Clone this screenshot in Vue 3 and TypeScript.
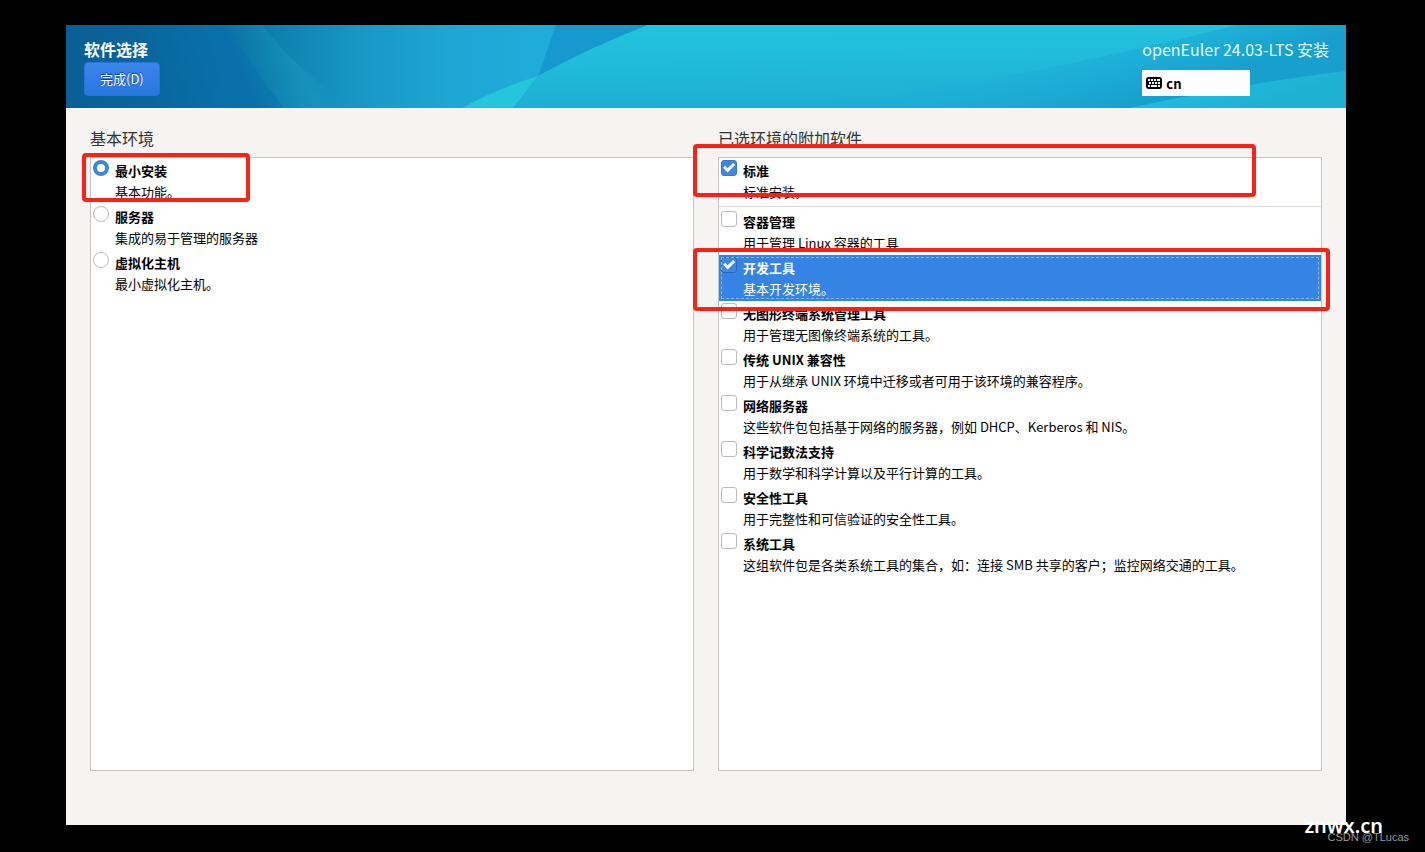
<script setup lang="ts">
import { ref } from 'vue'

interface Choice {
  id: string
  title: string
  summary: string
}

const environments: Choice[] = [
  { id: 'minimal', title: '最小安装', summary: '基本功能。' },
  { id: 'server', title: '服务器', summary: '集成的易于管理的服务器' },
  { id: 'virtualization', title: '虚拟化主机', summary: '最小虚拟化主机。' },
]

const environmentAddons: Choice[] = [
  { id: 'standard', title: '标准', summary: '标准安装。' },
]

const commonAddons: Choice[] = [
  { id: 'container', title: '容器管理', summary: '用于管理 Linux 容器的工具' },
  { id: 'development', title: '开发工具', summary: '基本开发环境。' },
  { id: 'headless', title: '无图形终端系统管理工具', summary: '用于管理无图像终端系统的工具。' },
  { id: 'legacy', title: '传统 UNIX 兼容性', summary: '用于从继承 UNIX 环境中迁移或者可用于该环境的兼容程序。' },
  { id: 'network', title: '网络服务器', summary: '这些软件包包括基于网络的服务器，例如 DHCP、Kerberos 和 NIS。' },
  { id: 'scientific', title: '科学记数法支持', summary: '用于数学和科学计算以及平行计算的工具。' },
  { id: 'security', title: '安全性工具', summary: '用于完整性和可信验证的安全性工具。' },
  { id: 'system', title: '系统工具', summary: '这组软件包是各类系统工具的集合，如：连接 SMB 共享的客户；监控网络交通的工具。' },
]

const environment = ref('minimal')
const addons = ref<string[]>(['standard', 'development'])
const activeRow = ref('development')
</script>

<template>
  <div class="screen">
    <main class="installer">
      <header class="banner">
        <svg class="banner-art" viewBox="0 0 1280 83" preserveAspectRatio="none" aria-hidden="true">
          <defs>
            <linearGradient id="base" x1="0" x2="1" y1="0" y2="0">
              <stop offset="0" stop-color="#085f95" />
              <stop offset="0.11" stop-color="#096ba1" />
              <stop offset="0.17" stop-color="#0f82b2" />
              <stop offset="0.23" stop-color="#1897c5" />
              <stop offset="0.3" stop-color="#1ea6d5" />
              <stop offset="0.37" stop-color="#20acda" />
              <stop offset="1" stop-color="#20acda" />
            </linearGradient>
            <linearGradient id="valley" gradientUnits="userSpaceOnUse" x1="90" x2="225" y1="85" y2="30">
              <stop offset="0" stop-color="#0a6ca4" stop-opacity="0" />
              <stop offset="0.65" stop-color="#0970ac" />
              <stop offset="1" stop-color="#0d83b5" stop-opacity="0" />
            </linearGradient>
            <linearGradient id="ridge" gradientUnits="userSpaceOnUse" x1="185" x2="252" y1="60" y2="30">
              <stop offset="0" stop-color="#1592b8" stop-opacity="0" />
              <stop offset="0.7" stop-color="#1c9fc5" stop-opacity="0.4" />
              <stop offset="1" stop-color="#1799c4" stop-opacity="0.1" />
            </linearGradient>
            <linearGradient id="wave" x1="0" x2="0.12" y1="0" y2="1">
              <stop offset="0" stop-color="#23c4df" />
              <stop offset="0.5" stop-color="#21badb" />
              <stop offset="1" stop-color="#1eaed4" />
            </linearGradient>
            <linearGradient id="dusk" gradientUnits="userSpaceOnUse" x1="1010" x2="1045" y1="-10" y2="90">
              <stop offset="0" stop-color="#20afda" stop-opacity="0" />
              <stop offset="1" stop-color="#179fce" />
            </linearGradient>
            <linearGradient id="crest" gradientUnits="userSpaceOnUse" x1="1180" x2="1190" y1="55" y2="83">
              <stop offset="0" stop-color="#20b8dc" />
              <stop offset="1" stop-color="#1fb1d2" />
            </linearGradient>
          </defs>
          <rect width="1280" height="83" fill="url(#base)" />
          <path d="M60 0H160Q187 42 218 83H60Z" fill="url(#valley)" />
          <path d="M160 0H196Q235 50 290 83H218Q187 42 160 0Z" fill="url(#ridge)" />
          <path d="M490 0H582Q525 22 472 51Z" fill="#1798cf" />
          <path d="M396 83Q430 64 472 51L447 83Z" fill="#25c6dc" />
          <path d="M447 83L472 51Q525 22 582 0H1280V83Z" fill="url(#wave)" />
          <path d="M740 83Q960 54 1170 0H1280V83Z" fill="url(#dusk)" />
          <path d="M1063 83Q1180 58 1280 46V83Z" fill="url(#crest)" />
        </svg>
        <div class="banner-left">
          <h1 class="page-title">软件选择</h1>
          <button class="done" type="button">完成(D)</button>
        </div>
        <div class="banner-right">
          <span class="product">openEuler 24.03-LTS 安装</span>
          <button class="layout" type="button" aria-label="键盘布局 cn">
            <svg width="16" height="12" viewBox="0 0 16 12" aria-hidden="true">
              <rect width="16" height="12" rx="3" fill="#000" />
              <path
                d="M2 2h2v2H2zM5 2h2v2H5zM8 2h2v2H8zM11 2h3v2h-3zM3 5h2v2H3zM6 5h2v2H6zM9 5h2v2H9zM12 5h2v2h-2zM2 8h2v2H2zM5 8h6v2H5zM12 8h2v2h-2z"
                fill="#fff"
              />
            </svg>
            <span>cn</span>
          </button>
        </div>
      </header>

      <div class="columns">
        <section class="column">
          <h2 id="env-heading" class="heading">基本环境</h2>
          <div class="list" role="radiogroup" aria-labelledby="env-heading">
            <label v-for="item in environments" :key="item.id" class="row">
              <input v-model="environment" class="mark radio" type="radio" name="environment" :value="item.id" />
              <span class="text">
                <strong class="title">{{ item.title }}</strong>
                <span class="summary">{{ item.summary }}</span>
              </span>
            </label>
            <span class="callout callout-minimal" aria-hidden="true"></span>
          </div>
        </section>

        <section class="column">
          <h2 id="addon-heading" class="heading">已选环境的附加软件</h2>
          <div class="list" role="group" aria-labelledby="addon-heading">
            <label
              v-for="item in environmentAddons"
              :key="item.id"
              class="row"
              :class="{ active: activeRow === item.id }"
              @click="activeRow = item.id"
            >
              <input v-model="addons" class="mark check" type="checkbox" :value="item.id" />
              <span class="text">
                <strong class="title">{{ item.title }}</strong>
                <span class="summary">{{ item.summary }}</span>
              </span>
            </label>
            <hr class="divider" />
            <label
              v-for="item in commonAddons"
              :key="item.id"
              class="row"
              :class="{ active: activeRow === item.id }"
              @click="activeRow = item.id"
            >
              <input v-model="addons" class="mark check" type="checkbox" :value="item.id" />
              <span class="text">
                <strong class="title">{{ item.title }}</strong>
                <span class="summary">{{ item.summary }}</span>
              </span>
            </label>
            <span class="callout callout-standard" aria-hidden="true"></span>
            <span class="callout callout-development" aria-hidden="true"></span>
          </div>
        </section>
      </div>
    </main>
    <span class="site-mark">znwx.cn</span>
    <span class="author-mark">CSDN @TLucas</span>
  </div>
</template>

<style>
body {
  margin: 0;
  background: #000;
}
</style>

<style scoped>
.screen {
  position: relative;
  box-sizing: border-box;
  display: flex;
  min-height: 100vh;
  padding: 25px 79px 27px 66px;
  background: #000;
  color: #000;
  font-family: 'Noto Sans CJK SC', 'Noto Sans', sans-serif;
  font-size: 13px;
}

.installer {
  flex: 1;
  min-width: 0;
  display: flex;
  flex-direction: column;
  background: #f5f4f2;
}

.banner {
  position: relative;
  display: flex;
  justify-content: space-between;
  box-sizing: border-box;
  min-height: 83px;
  padding: 12px 17px 12px 18px;
  color: #fff;
}

.banner-art {
  position: absolute;
  inset: 0;
  width: 100%;
  height: 100%;
}

.banner-left,
.banner-right {
  position: relative;
  display: flex;
  flex-direction: column;
  align-items: flex-start;
}

.page-title {
  margin: 0;
  font-size: 16px;
  line-height: 24px;
}

.done {
  height: 34px;
  margin-top: 1px;
  padding: 0 15px 2px;
  border: 1px solid #2b74d6;
  border-radius: 4px;
  background: linear-gradient(#3a86ea, #2a76e2);
  color: #fff;
  font: inherit;
  text-shadow: 0 -1px 1px rgba(0, 20, 70, 0.7);
}

.product {
  font-size: 16px;
  line-height: 24px;
  color: #e2fbff;
}

.layout {
  display: flex;
  align-items: center;
  gap: 4px;
  width: 108px;
  height: 26px;
  margin-top: 9px;
  padding: 0 4px;
  border: 0;
  background: #fdfdfd;
  color: #000;
  font: inherit;
  font-weight: 700;
}

.columns {
  flex: 1;
  display: grid;
  grid-template-columns: 1fr 1fr;
  gap: 24px;
  padding: 18px 24px 54px;
}

.column {
  display: flex;
  flex-direction: column;
  min-width: 0;
}

.heading {
  margin: 0 0 7px;
  font-size: 16px;
  font-weight: 400;
  line-height: 24px;
  color: #333;
}

.list {
  position: relative;
  flex: 1;
  border: 1px solid #c8c5c2;
  background: #fff;
}

.row {
  display: flex;
  gap: 6px;
  padding: 2px;
}

.text {
  display: flex;
  flex-direction: column;
  line-height: 21px;
}

.active {
  background: #3584e4;
  color: #fff;
  outline: 1px dashed #85b8f2;
  outline-offset: -3px;
}

.mark {
  appearance: none;
  flex: none;
  box-sizing: border-box;
  width: 16px;
  height: 16px;
  margin: 0;
  border: 1px solid #bdbbb9;
  background: #fff;
}

.radio {
  border-radius: 50%;
}

.radio:checked {
  border: 4px solid #3b87dd;
}

.check {
  border-radius: 3px;
}

.check:checked {
  border-color: #3079cf;
  background: #3c88e2;
}

.check:checked::before {
  content: '';
  display: block;
  width: 14px;
  height: 14px;
  background: #fff;
  clip-path: polygon(8% 48%, 22% 34%, 40% 51%, 80% 15%, 94% 29%, 40% 83%);
}

.active .check:checked {
  border-color: #2a67b3;
}

.divider {
  height: 1px;
  margin: 2px 0;
  border: 0;
  background: #deddda;
}

.callout {
  position: absolute;
  box-sizing: border-box;
  border: 4px solid #f82216;
  border-radius: 4px;
  pointer-events: none;
}

.callout-minimal {
  left: -9px;
  top: -5px;
  width: 168px;
  height: 49px;
}

.callout-standard {
  left: -26px;
  right: 65px;
  top: -14px;
  height: 53px;
}

.callout-development {
  left: -26px;
  right: -9px;
  top: 90px;
  height: 63px;
}

.site-mark,
.author-mark {
  position: absolute;
  white-space: nowrap;
}

.site-mark {
  right: 42px;
  bottom: 12px;
  color: #fff;
  font-family: 'Noto Sans', sans-serif;
  font-size: 20px;
  font-weight: 600;
  line-height: 28px;
}

.author-mark {
  right: 16px;
  bottom: 7px;
  color: #9a9a9a;
  font-family: 'Liberation Sans', Arial, sans-serif;
  font-size: 11px;
  line-height: 16px;
}
</style>
